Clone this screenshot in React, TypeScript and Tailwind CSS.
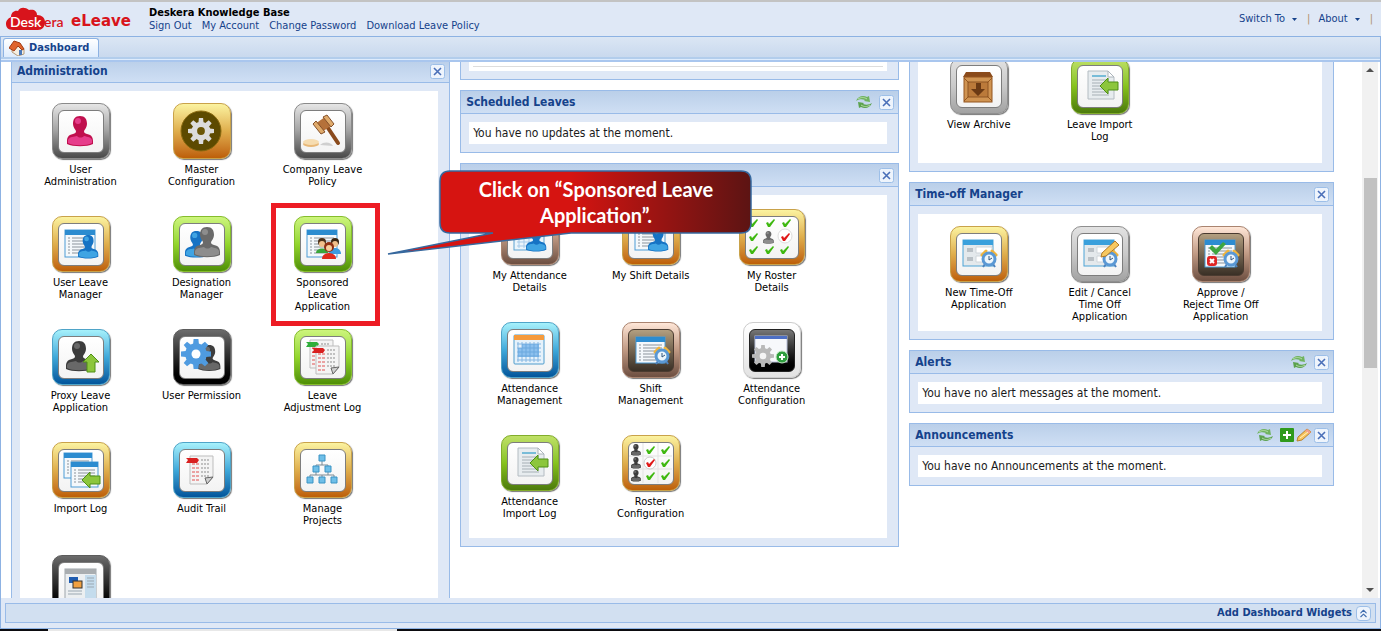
import type { ReactNode } from 'react';
import { ChevronsUp } from 'lucide-react';

type Tone = 'gray' | 'silver' | 'gold' | 'green' | 'olive' | 'blue' | 'black' | 'brown' | 'white';

const frames: Record<Tone, string> = {
  gray: 'from-[#e6e6e6] via-[#a2a2a2] to-[#4a4a4a] border-[#8a8a8a]',
  silver: 'from-[#e2e2e2] via-[#c9c9c9] to-[#a2a2a2] border-[#8f8f8f]',
  gold: 'from-[#fbf3a0] via-[#dfae4c] to-[#bd5f06] border-[#c9a24a]',
  green: 'from-[#cdf57c] via-[#93d62c] to-[#4f8f06] border-[#85bd2c]',
  olive: 'from-[#bfe066] via-[#87c31d] to-[#4c7a0c] border-[#82ad2b]',
  blue: 'from-[#a6f1fb] via-[#3fa9da] to-[#02559b] border-[#4fa4c8]',
  black: 'from-[#6c6c6c] via-[#2a2a2a] to-[#000000] border-[#5c5c5c]',
  brown: 'from-[#ffe7d8] via-[#c09a84] to-[#6d4f41] border-[#a98470]',
  white: 'from-[#ffffff] via-[#f2f2f2] to-[#e2e2e2] border-[#cccccc]',
};

const insides = {
  light: 'bg-linear-to-b from-white to-[#f3f3f3] border-[#7d7d7d]',
  sepia: 'bg-linear-to-b from-[#b39f80] to-[#3a3026] border-[#4a3b30]',
  dark: 'bg-linear-to-b from-[#777777] to-[#000000] border-[#222222]',
  none: 'border-transparent',
};

function Person({ x, y, s = 1, fill, shine }: { x: number; y: number; s?: number; fill: string; shine: string }) {
  return (
    <g transform={`translate(${x} ${y}) scale(${s})`}>
      <path
        fill={fill}
        d="M13 0C18 0 20 3 20 8C20 11 18 13 17 15C17 17 18 17 20 18C25 19 26 22 26 25V28C20 31 6 31 0 28V25C0 22 1 19 6 18C8 17 9 17 9 15C8 13 6 11 6 8C6 3 8 0 13 0Z"
      />
      <ellipse cx="11" cy="5" rx="3" ry="3" fill={shine} opacity="0.6" />
      <path fill={shine} opacity="0.6" d="M1 24C3 20 7 21 10 20C12 22 15 22 17 20C21 21 24 21 25 24V27C20 30 6 30 1 27Z" />
    </g>
  );
}

const bluePerson = { fill: '#1673c4', shine: '#5cc4f8' };
const grayPerson = { fill: '#6a6a6a', shine: '#a5a5a5' };
const darkPerson = { fill: '#3c3c3c', shine: '#858585' };

function ListWindow({ x = 7, y = 7, w = 30, h = 27 }: { x?: number; y?: number; w?: number; h?: number }) {
  const lines = [];
  for (let ly = y + 8; ly < y + h - 2; ly += 3) lines.push(ly);
  return (
    <g>
      <rect x={x} y={y} width={w} height={h} fill="#f4f8fb" stroke="#4c9cd6" />
      <rect x={x} y={y} width={w} height="5" fill="#2c8cd0" />
      {lines.map((ly) => (
        <path key={ly} d={`M${x + 3} ${ly}h2M${x + 7} ${ly}h${w - 10}`} stroke="#8b939b" />
      ))}
    </g>
  );
}

function FormWindow() {
  return (
    <g>
      <rect x="7" y="7" width="30" height="26" fill="#e4e9ec" stroke="#4da3d6" />
      <rect x="7" y="7" width="30" height="5" fill="#3aa0dc" />
      <path d="M11 16h6M11 18h6M11 25h6M11 27h6" stroke="#8f979e" />
      <path d="M20 14h16v6H20zM20 23h16v6H20z" fill="#fff" stroke="#cfd5da" />
    </g>
  );
}

function Clock({ x = 33, y = 26 }: { x?: number; y?: number }) {
  return (
    <g transform={`translate(${x} ${y})`}>
      <path d="M-7-4L-3-8M7-4L3-8" stroke="#f0b43c" strokeWidth="3" strokeLinecap="round" />
      <path d="M-4 5l-2 3M4 5l2 3" stroke="#4f83bd" strokeWidth="2" />
      <circle r="6" fill="#eef6fc" stroke="#5a98d4" strokeWidth="3" />
      <path d="M0 1V-3M0 1L3-1" stroke="#31557c" fill="none" />
    </g>
  );
}

function Gear({ x, y, r, fill, hole }: { x: number; y: number; r: number; fill: string; hole: string }) {
  return (
    <g transform={`translate(${x} ${y})`}>
      {[0, 45, 90, 135, 180, 225, 270, 315].map((a) => (
        <path key={a} transform={`rotate(${a})`} fill={fill} d={`M${-r * 0.26} 0L${-r * 0.16} ${-r}H${r * 0.16}L${r * 0.26} 0Z`} />
      ))}
      <circle r={r * 0.72} fill={fill} />
      <circle r={r * 0.3} fill={hole} />
    </g>
  );
}

function Arrow({ x, y, rotate = 0 }: { x: number; y: number; rotate?: number }) {
  return (
    <path
      transform={`translate(${x} ${y}) rotate(${rotate})`}
      d="M-9 0L-1-8V-4H9V4H-1V8Z"
      fill="#8cc63c"
      stroke="#4e8f16"
    />
  );
}

function Check({ x, y, fill = '#3fb810' }: { x: number; y: number; fill?: string }) {
  return <path transform={`translate(${x} ${y})`} fill={fill} d="M-4 0L-2-1L-1 1L4-4L5-3L0 4H-2Z" />;
}

function LogSheet({ x, y, tag }: { x: number; y: number; tag: string }) {
  return (
    <g transform={`translate(${x} ${y})`}>
      <path d="M0 0H23V21L17 28H0Z" fill="#f4f4f4" stroke="#bdbdbd" />
      <path d="M23 21L17 28L15 22Z" fill="#d0d0d0" stroke="#666" />
      {[8, 12, 16, 20, 24].map((ly) => (
        <path key={ly} d={`M2 ${ly}h8`} stroke="#e05050" strokeDasharray="3 1" />
      ))}
      {[4, 8, 12, 16, 20].map((ly) => (
        <path key={ly} d={`M11 ${ly}h9`} stroke="#8d8d8d" strokeDasharray="2 1" />
      ))}
      <path d="M-4 2H7L9 4L7 7H-4L-2 4Z" fill={tag} />
    </g>
  );
}

function ImportSheet() {
  return (
    <g>
      <path d="M11 6H31L37 12V34H11Z" fill="#e7ecef" stroke="#b4bcc2" />
      <path d="M31 6V12H37Z" fill="#fff" stroke="#aab3ba" />
      <path d="M15 11h14" stroke="#78bcd8" strokeWidth="2" />
      <path d="M15 15h17M15 18h17M15 21h17M15 24h17M15 27h17M15 30h17" stroke="#a6afb5" />
      <Arrow x={32} y={21} />
    </g>
  );
}

const art = {
  userAdmin: <Person x={9} y={6} fill="#c0104e" shine="#ff5cb4" />,
  masterConfig: (
    <g>
      <circle cx="22" cy="21" r="20" fill="#5d4a00" stroke="#8a6a10" />
      <Gear x={22} y={21} r={13} fill="#dcdcdc" hole="#6b5606" />
    </g>
  ),
  policy: (
    <g>
      <ellipse cx="11" cy="34" rx="8" ry="3" fill="#e8b878" />
      <ellipse cx="11" cy="32" rx="8" ry="3" fill="#f6dcb0" />
      <path d="M20 35C24 31 31 32 33 36Z" fill="#cfcfcf" />
      <path d="M26 15L38 33" stroke="#8a4a1c" strokeWidth="4" strokeLinecap="round" />
      <path d="M15 14L25 7L32 15L22 22Z" fill="#b5713a" />
      <path d="M13 14L16 11L25 22L21 24ZM23 7L27 5L34 14L31 17Z" fill="#e0ab6c" stroke="#84502a" />
    </g>
  ),
  userLeave: (
    <g>
      <ListWindow />
      <Person x={20} y={12} s={0.78} {...bluePerson} />
    </g>
  ),
  designation: (
    <g>
      <Person x={6} y={8} s={0.88} {...bluePerson} />
      <Person x={15} y={4} s={1} {...grayPerson} />
    </g>
  ),
  sponsored: (
    <g>
      <ListWindow />
      <circle cx="22" cy="19" r="4" fill="#4b3018" />
      <path d="M16 30C16 24 28 24 28 30Z" fill="#3aa63a" />
      <circle cx="35" cy="19" r="4" fill="#3b2612" />
      <path d="M29 31C29 23 41 23 41 31Z" fill="#3c9be0" />
      <circle cx="22" cy="21" r="3" fill="#f1c08c" />
      <circle cx="35" cy="21" r="3" fill="#f1c08c" />
      <circle cx="29" cy="24" r="5" fill="#8f2f12" />
      <circle cx="29" cy="25" r="3" fill="#f7cd9c" />
      <path d="M22 36C22 28 36 28 36 36Z" fill="#e02a1c" />
    </g>
  ),
  proxy: (
    <g>
      <Person x={8} y={5} {...darkPerson} />
      <Arrow x={33} y={27} rotate={90} />
    </g>
  ),
  permission: (
    <g>
      <Person x={19} y={9} s={0.86} {...darkPerson} />
      <Gear x={17} y={18} r={15} fill="#4f9be0" hole="#ffffff" />
    </g>
  ),
  adjustment: (
    <g>
      <LogSheet x={10} y={4} tag="#2fae3a" />
      <LogSheet x={16} y={10} tag="#d92020" />
    </g>
  ),
  importLog: (
    <g>
      <ListWindow x={6} y={4} w={28} h={25} />
      <ListWindow x={13} y={13} w={27} h={25} />
      <Arrow x={33} y={31} />
    </g>
  ),
  audit: <LogSheet x={11} y={7} tag="#d92020" />,
  projects: (
    <g>
      <path d="M22 10V16M16 21V16H28V21M10 32V26H34V32M22 32V26M16 21V26M28 21V26" stroke="#7d8a93" fill="none" />
      <path
        d="M19 6h6v6h-6zM13 17h6v6h-6zM25 17h6v6h-6zM7 28h6v6H7zM19 28h6v6h-6zM31 28h6v6h-6z"
        fill="#6fbfe8"
        stroke="#3b93c4"
      />
    </g>
  ),
  page: (
    <g>
      <rect x="7" y="7" width="31" height="32" fill="#eceff1" stroke="#9da5ab" />
      <rect x="7" y="7" width="31" height="5" fill="#a9adb0" />
      <rect x="27" y="13" width="11" height="26" fill="#c4dced" />
      <path d="M29 16h7M29 19h7M29 22h7M29 25h7M10 29h14M10 32h14" stroke="#9aa7b1" />
      <rect x="11" y="15" width="9" height="6" fill="#1f5cb0" />
      <rect x="15" y="19" width="9" height="7" fill="#f0a040" stroke="#333" />
    </g>
  ),
  attendance: (
    <g>
      <rect x="7" y="7" width="30" height="27" fill="#eaf4fb" stroke="#5aa2d2" />
      <path d="M10 14h24M10 18h24M10 22h24M10 26h24M10 30h24M12 12v20M17 12v20M22 12v20M27 12v20M32 12v20" stroke="#a5c9e8" />
      <Person x={19} y={12} s={0.78} {...bluePerson} />
    </g>
  ),
  calendar: (
    <g>
      <rect x="7" y="6" width="30" height="29" rx="1" fill="#e6f2fb" stroke="#4e9ccc" />
      <rect x="7" y="6" width="30" height="5" fill="#f59a3c" />
      <path d="M15 15h17v13H11V19h4z" fill="#8cc0ee" />
      <path d="M10 15h24M10 19h24M10 23h24M10 27h24M10 31h24M11 13v20M15 13v20M19 13v20M23 13v20M27 13v20M31 13v20" stroke="#5f9fd8" opacity="0.7" />
    </g>
  ),
  shift: (
    <g>
      <ListWindow x={8} y={8} w={29} h={26} />
      <Clock x={34} y={27} />
    </g>
  ),
  attendanceConfig: (
    <g>
      <rect x="6" y="7" width="32" height="26" fill="#f7f8fb" stroke="#b7bfd8" />
      <rect x="6" y="7" width="32" height="3" fill="#4d6fc4" />
      <Gear x={14} y={27} r={11} fill="#b9b9b9" hole="#f5f5f5" />
      <circle cx="33" cy="28" r="6" fill="#2e9e3e" stroke="#bfe6bf" />
      <path d="M33 25v6M30 28h6" stroke="#fff" strokeWidth="2" />
    </g>
  ),
  importSheet: <ImportSheet />,
  rosterDetails: (
    <g>
      <Check x={4} y={7} />
      <Check x={21} y={7} />
      <Check x={37} y={7} />
      <Check x={4} y={21} />
      <Person x={14} y={15} s={0.42} {...grayPerson} />
      <circle cx="36" cy="20" r="7" fill="#fff" stroke="#ddd" />
      <Check x={36} y={21} fill="#e01818" />
      <Check x={4} y={34} />
      <Check x={20} y={34} />
      <Check x={35} y={34} />
    </g>
  ),
  rosterConfig: (
    <g>
      <path d="M15 1v40M30 1v40M1 14h43M1 27h43" stroke="#e3e3e3" />
      {[2, 15, 28].map((y) => (
        <g key={y}>
          <Person x={3} y={y} s={0.38} {...darkPerson} />
          {y === 15 && <circle cx="22" cy="21" r="6" fill="#fff" stroke="#ccc" />}
          <Check x={22} y={y + 6} fill={y === 15 ? '#e01818' : '#3fb810'} />
          <Check x={37} y={y + 6} />
        </g>
      ))}
    </g>
  ),
  archive: (
    <g>
      <path d="M10 7H34L37 12H7Z" fill="#8a4a1a" />
      <rect x="8" y="12" width="28" height="25" fill="#d09452" stroke="#93551f" />
      <path d="M12 17h20v15H12z" fill="#bb7a3a" stroke="#8d5523" />
      <path d="M8 13l5 5M36 13l-5 5M8 36l5-5M36 36l-5-5" stroke="#93551f" />
      <path d="M20 18h5v6h4l-7 7l-7-7h5z" fill="#6b3a14" />
    </g>
  ),
  timeOff: (
    <g>
      <FormWindow />
      <Clock />
    </g>
  ),
  editTimeOff: (
    <g>
      <FormWindow />
      <Clock />
      <path d="M25 20L38 8L42 12L29 23L24 24Z" fill="#f7c860" stroke="#b07a2a" />
    </g>
  ),
  approve: (
    <g>
      <ListWindow />
      <path d="M11 15L14 12L18 16L25 9L28 11L18 22Z" fill="#3ea640" />
      <rect x="9" y="23" width="10" height="10" rx="3" fill="#e02424" />
      <path d="M12 26l4 4M16 26l-4 4" stroke="#fff" strokeWidth="2" />
      <Clock />
    </g>
  ),
};

type TileData = {
  lines: string[];
  icon: keyof typeof art;
  tone: Tone;
  inside?: keyof typeof insides;
  wide?: boolean;
  marked?: boolean;
};

const administration: TileData[] = [
  { lines: ['User', 'Administration'], icon: 'userAdmin', tone: 'gray' },
  { lines: ['Master', 'Configuration'], icon: 'masterConfig', tone: 'gold', inside: 'none' },
  { lines: ['Company Leave', 'Policy'], icon: 'policy', tone: 'gray' },
  { lines: ['User Leave', 'Manager'], icon: 'userLeave', tone: 'gold' },
  { lines: ['Designation', 'Manager'], icon: 'designation', tone: 'green' },
  { lines: ['Sponsored', 'Leave', 'Application'], icon: 'sponsored', tone: 'green', marked: true },
  { lines: ['Proxy Leave', 'Application'], icon: 'proxy', tone: 'blue' },
  { lines: ['User Permission'], icon: 'permission', tone: 'black' },
  { lines: ['Leave', 'Adjustment Log'], icon: 'adjustment', tone: 'green' },
  { lines: ['Import Log'], icon: 'importLog', tone: 'gold' },
  { lines: ['Audit Trail'], icon: 'audit', tone: 'blue' },
  { lines: ['Manage', 'Projects'], icon: 'projects', tone: 'gold' },
  { lines: [], icon: 'page', tone: 'black' },
];

const attendance: TileData[] = [
  { lines: ['My Attendance', 'Details'], icon: 'attendance', tone: 'brown' },
  { lines: ['My Shift Details'], icon: 'userLeave', tone: 'gold' },
  { lines: ['My Roster', 'Details'], icon: 'rosterDetails', tone: 'gold', wide: true },
  { lines: ['Attendance', 'Management'], icon: 'calendar', tone: 'blue' },
  { lines: ['Shift', 'Management'], icon: 'shift', tone: 'brown', inside: 'sepia' },
  { lines: ['Attendance', 'Configuration'], icon: 'attendanceConfig', tone: 'white', inside: 'dark' },
  { lines: ['Attendance', 'Import Log'], icon: 'importSheet', tone: 'olive' },
  { lines: ['Roster', 'Configuration'], icon: 'rosterConfig', tone: 'gold' },
];

const archive: TileData[] = [
  { lines: ['View Archive'], icon: 'archive', tone: 'silver' },
  { lines: ['Leave Import', 'Log'], icon: 'importSheet', tone: 'olive' },
];

const timeOff: TileData[] = [
  { lines: ['New Time-Off', 'Application'], icon: 'timeOff', tone: 'gold' },
  { lines: ['Edit / Cancel', 'Time Off', 'Application'], icon: 'editTimeOff', tone: 'silver' },
  { lines: ['Approve /', 'Reject Time Off', 'Application'], icon: 'approve', tone: 'brown', inside: 'sepia' },
];

function Tile({ lines, icon, tone, inside = 'light', wide, marked }: TileData) {
  return (
    <a href="#" className="relative flex h-[113px] w-[121px] flex-col items-center pt-2.5 text-[11px] leading-3 text-black">
      <span
        className={`flex h-14 items-center justify-center rounded-[10px] border bg-linear-to-b shadow-[1px_1px_1px_#777] ${wide ? 'w-[66px]' : 'w-[58px]'} ${frames[tone]}`}
      >
        <span className={`flex h-[43px] items-center justify-center rounded-md border ${wide ? 'w-[54px]' : 'w-[46px]'} ${insides[inside]}`}>
          <svg viewBox="0 0 45 42" className="h-[42px] w-[45px] shrink-0 overflow-visible">
            {art[icon]}
          </svg>
        </span>
      </span>
      <span className="mt-[5px] text-center">
        {lines.map((line) => (
          <span key={line} className="block whitespace-nowrap">
            {line}
          </span>
        ))}
      </span>
      {marked && <span className="absolute -top-[3px] left-[9px] h-[123px] w-[109px] border-[5px] border-[#ed1c24]" />}
    </a>
  );
}

function Tiles({ items, className = 'py-0.5' }: { items: TileData[]; className?: string }) {
  return (
    <div className={`flex flex-wrap ${className}`}>
      {items.map((item, i) => (
        <Tile key={i} {...item} />
      ))}
    </div>
  );
}

function RefreshIcon() {
  return (
    <svg viewBox="0 0 18 14" className="h-3.5 w-[18px]">
      <path d="M1 6C3 1 8 0 12 2L14 1L15 7L9 6L10 5C7 4 4 4 1 6Z" fill="#6fb35f" />
      <path d="M17 8C15 13 10 14 6 12L4 13L3 7L9 8L8 9C11 10 14 10 17 8Z" fill="#5ba24e" />
      <path d="M3 4C6 2 9 2 12 4M15 10C12 12 9 12 6 10" stroke="#b4dca6" fill="none" />
    </svg>
  );
}

function AddIcon() {
  return (
    <svg viewBox="0 0 14 14" className="size-3.5">
      <rect width="14" height="14" rx="1" fill="#2f9a1c" />
      <path d="M7 3v8M3 7h8" stroke="#fff" strokeWidth="2" />
    </svg>
  );
}

function PencilIcon() {
  return (
    <svg viewBox="0 0 16 14" className="h-3.5 w-4">
      <path d="M1 13L2 9L11 1L15 4L6 12Z" fill="#f8c45c" stroke="#b9822e" />
      <path d="M11 1L15 4L13 6L9 3Z" fill="#f3a08a" />
      <path d="M4 10L12 4" stroke="#fff0c0" />
    </svg>
  );
}

function CloseIcon() {
  return (
    <svg viewBox="0 0 15 15" className="size-[15px]">
      <rect x="0.5" y="0.5" width="14" height="14" rx="2" fill="#eef4fc" stroke="#9dbfe8" />
      <path d="M4 4l7 7M11 4l-7 7" stroke="#4a6fb8" strokeWidth="1.6" />
    </svg>
  );
}

type PanelProps = { title?: string; tools?: ('refresh' | 'add' | 'edit')[]; children?: ReactNode };

function Panel({ title, tools = [], children }: PanelProps) {
  return (
    <section className="border border-[#99bbe8] bg-[#dfe8f6]">
      {title !== undefined && (
        <header className="flex h-[23px] items-center gap-0.5 border-b border-[#99bbe8] bg-linear-to-b from-[#bacfe9] to-[#cfdff4] pr-1 pl-[5px]">
          <h2 className="flex-1 text-[12px] font-bold text-[#15428b]">{title}</h2>
          {tools.includes('refresh') && (
            <button type="button" aria-label="Refresh" className="mr-1">
              <RefreshIcon />
            </button>
          )}
          {tools.includes('add') && (
            <button type="button" aria-label="Add">
              <AddIcon />
            </button>
          )}
          {tools.includes('edit') && (
            <button type="button" aria-label="Edit">
              <PencilIcon />
            </button>
          )}
          <button type="button" aria-label="Close">
            <CloseIcon />
          </button>
        </header>
      )}
      <div className="pt-2 pr-[11px] pb-2 pl-2">
        <div className="bg-white">{children}</div>
      </div>
    </section>
  );
}

function Message({ children }: { children: ReactNode }) {
  return <p className="px-1 text-[12px] leading-[22px] text-[#1a1a1a]">{children}</p>;
}

function Logo() {
  return (
    <svg viewBox="0 0 130 26" className="h-[26px] w-[130px]" role="img" aria-label="Deskera eLeave">
      <path
        d="M7 24C2 24 0 21 0 18C0 14 3 12 5 11C5 6 9 4 12 5C14 1 19 1 23 4C28 3 31 5 31 9C36 9 39 12 39 16C39 21 36 24 32 24Z"
        fill="#d8141c"
      />
      <text x="4" y="21" fontSize="14" fontWeight="600" fill="#fff" fontFamily="Lato, sans-serif">
        Desk
      </text>
      <text x="38" y="21" fontSize="14" fontWeight="600" fill="#d8141c" fontFamily="Lato, sans-serif">
        era
      </text>
      <text x="65" y="20" fontSize="15" fontWeight="700" fill="#d8141c" fontFamily="'DejaVu Sans', sans-serif">
        eLeave
      </text>
    </svg>
  );
}

function HomeIcon() {
  return (
    <svg viewBox="0 0 16 16" className="size-4">
      <path d="M3 7L10 4L15 9V14L9 16L3 12Z" fill="#f5efe2" stroke="#b39a78" />
      <path d="M0 8L5 1L11 3L15 9L13 10L9 6L5 11Z" fill="#e0642c" stroke="#a13c14" />
      <path d="M10 10h3v5h-3z" fill="#4a78b8" />
    </svg>
  );
}

function Callout() {
  return (
    <div className="absolute top-[108px] left-[386px] h-[86px] w-[366px]">
      <svg viewBox="0 0 366 86" className="absolute inset-0 size-full">
        <defs>
          <linearGradient id="callout" x1="0" y1="0" x2="1" y2="0">
            <stop offset="0.5" stopColor="#d61411" />
            <stop offset="1" stopColor="#5c1413" />
          </linearGradient>
        </defs>
        <path
          d="M63 1H354Q364 1 364 11V53Q364 63 354 63H184L1 84L106 63H63Q53 63 53 53V11Q53 1 63 1Z"
          fill="url(#callout)"
          stroke="#36689e"
          strokeWidth="1.5"
        />
      </svg>
      <p className="relative pt-1.5 pl-[52px] text-center font-[Lato,sans-serif] text-[20px] leading-[26px] font-bold text-white">
        Click on “Sponsored Leave
        <br />
        Application”.
      </p>
    </div>
  );
}

function Caret({ down }: { down?: boolean }) {
  return (
    <svg viewBox="0 0 8 4" className="h-1 w-2">
      <path d={down ? 'M0 0H8L4 4Z' : 'M0 4H8L4 0Z'} fill="#505050" />
    </svg>
  );
}

function MenuButton({ label }: { label: string }) {
  return (
    <button type="button" className="flex items-center gap-[7px]">
      {label}
      <svg viewBox="0 0 5 3" className="h-[3px] w-[5px]">
        <path d="M0 0H5L2.5 3Z" fill="#15428b" />
      </svg>
    </button>
  );
}

export default function App() {
  return (
    <div className="flex h-screen flex-col overflow-hidden bg-[#dfe8f6] font-['DejaVu_Sans_Condensed','Noto_Sans',sans-serif]">
      <header className="flex h-9 shrink-0 items-start border-t-2 border-[#c3c3c3] bg-[#dfe8f6] pr-2 pl-1.5">
        <div className="mt-1 w-[143px]">
          <Logo />
        </div>
        <div className="flex-1 pt-1 text-[11px] leading-[13px]">
          <div className="font-bold text-black">Deskera Knowledge Base</div>
          <nav className="flex gap-2.5 whitespace-nowrap text-[#15428b]">
            <a href="#">Sign Out</a>
            <a href="#">My Account</a>
            <a href="#">Change Password</a>
            <a href="#">Download Leave Policy</a>
          </nav>
        </div>
        <div className="flex items-center gap-2 pt-[11px] text-[11px] leading-3 text-[#15428b]">
          <MenuButton label="Switch To" />
          <span className="pl-0.5 text-[#b0936c]">|</span>
          <MenuButton label="About" />
          <span className="pl-0.5 text-[#b0936c]">|</span>
        </div>
      </header>

      <main className="flex min-h-0 flex-1 flex-col border border-b-0 border-[#8db2e3]">
        {/* Tabs */}
        <div className="flex h-[22px] shrink-0 items-end border-b-2 border-[#b2cdec] bg-linear-to-b from-[#dbe6f4] to-[#c9d9ee] pl-0.5">
          <button
            type="button"
            className="flex h-[19px] items-center gap-1 rounded-t-[3px] border border-b-0 border-[#8db2e3] bg-linear-to-b from-white to-[#deecfd] px-[5px] pr-[9px] text-[11px] font-bold text-[#15428b]"
          >
            <HomeIcon />
            Dashboard
          </button>
        </div>
        <div className="h-[3px] shrink-0 border-b-2 border-[#a9c6ee] bg-[#deecfd]" />

        {/* Widgets */}
        <div className="relative flex min-h-0 flex-1 overflow-hidden bg-white">
          <div className="flex min-w-0 flex-1 items-start">
            <div className="-mt-[3px] w-[33%] pl-2.5">
              <Panel title="Administration">
                <Tiles items={administration} />
              </Panel>
            </div>
            <div className="flex w-[33%] flex-col gap-2.5 pl-2.5">
              <div className="-mt-2.5">
                <Panel>
                  <div className="flex h-2.5 items-center px-1">
                    <hr className="flex-1 border-[#dddddd]" />
                  </div>
                </Panel>
              </div>
              <Panel title="Scheduled Leaves" tools={['refresh']}>
                <Message>You have no updates at the moment.</Message>
              </Panel>
              <Panel title="">
                <Tiles items={attendance} className="pt-1" />
              </Panel>
            </div>
            <div className="-mt-[25px] flex w-[34%] flex-col gap-2.5 pr-7 pl-2.5">
              <Panel>
                <Tiles items={archive} />
              </Panel>
              <Panel title="Time-off Manager">
                <Tiles items={timeOff} />
              </Panel>
              <Panel title="Alerts" tools={['refresh']}>
                <Message>You have no alert messages at the moment.</Message>
              </Panel>
              <Panel title="Announcements" tools={['refresh', 'add', 'edit']}>
                <Message>You have no Announcements at the moment.</Message>
              </Panel>
            </div>
          </div>
          <div className="flex w-[18px] flex-col items-center justify-between border-r-2 border-white bg-[#f1f1f1] py-1.5">
            <Caret />
            <div className="-mt-[114px] h-[190px] w-[13px] bg-[#c1c1c1]" />
            <Caret down />
          </div>
          <Callout />
        </div>

        {/* Widget drawer */}
        <div className="shrink-0 bg-[#dfe8f6] px-1 py-[5px]">
          <div className="flex h-5 items-center justify-end gap-1 border border-[#99bbe8] bg-[#d2e0f1] pr-1 text-[11px] font-bold text-[#15428b]">
            Add Dashboard Widgets
            <button type="button" aria-label="Expand" className="rounded-sm border border-[#9dbfe8] bg-[#eef4fc] text-[#3f6cae]">
              <ChevronsUp size={13} />
            </button>
          </div>
        </div>
      </main>

      <footer className="flex h-[3px] shrink-0 border-t border-[#8db2e3] bg-[#0b0b0f]">
        <div className="ml-12 w-[349px] bg-[#e8e8e8]" />
      </footer>
    </div>
  );
}
